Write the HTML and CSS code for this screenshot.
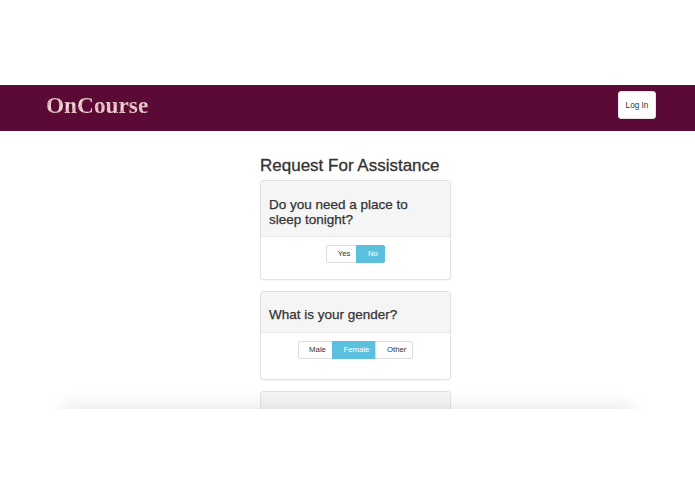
FILE: index.html
```html
<!DOCTYPE html>
<html lang="en">
<head>
<meta charset="utf-8">
<title>OnCourse</title>
<link rel="stylesheet" href="styles.css">
</head>
<body>
<div class="frame">
  <header class="navbar">
    <a class="brand">OnCourse</a>
    <button class="login">Log In</button>
  </header>
  <main class="content">
    <h1 class="title">Request For Assistance</h1>
    <section class="panel">
      <div class="panel-head tall"><h2>Do you need a place to sleep tonight?</h2></div>
      <div class="panel-body first">
        <div class="btn-group">
          <span class="btn">Yes</span><span class="btn active">No</span>
        </div>
      </div>
    </section>
    <section class="panel">
      <div class="panel-head short"><h2>What is your gender?</h2></div>
      <div class="panel-body">
        <div class="btn-group">
          <span class="btn">Male</span><span class="btn active">Female</span><span class="btn">Other</span>
        </div>
      </div>
    </section>
    <section class="panel">
      <div class="panel-head short"></div>
    </section>
  </main>
  <div class="fade"></div>
</div>
</body>
</html>
```
FILE: styles.css
```css
* { box-sizing: border-box; }
html, body { margin: 0; padding: 0; background: #fff; }
body {
  height: 494px;
  overflow: hidden;
  padding-top: 85px;
  font-family: "Liberation Sans", Arial, sans-serif;
  color: #333;
}
.frame {
  position: relative;
  height: 324px;
  overflow: hidden;
}
.navbar {
  height: 45.5px;
  background: #5a0a35;
  display: flex;
  align-items: flex-start;
  justify-content: space-between;
  padding: 6px 39px 0 46px;
}
.brand {
  font-family: "Liberation Serif", "Times New Roman", serif;
  font-weight: 700;
  font-size: 23.3px;
  line-height: 28px;
  color: #e3bcbc;
  background: repeating-linear-gradient(115deg, #f0d6d6 0 2px, #d3a3a6 2px 3px, #e8c6c6 3px 5px);
  -webkit-background-clip: text;
  background-clip: text;
  -webkit-text-fill-color: transparent;
}
.login {
  width: 38px;
  height: 28px;
  padding: 0;
  border: 1px solid #e4e4e4;
  border-radius: 3px;
  background: #fff;
  color: #333;
  font-family: inherit;
  font-size: 8.2px;
}
.content {
  width: 191px;
  margin-left: 260px;
  padding-top: 25.5px;
}
.title {
  margin: 0 0 4px;
  font-size: 17px;
  line-height: 20px;
  font-weight: 500;
  color: #333;
  -webkit-text-stroke: 0.3px #333;
}
.panel {
  border: 1px solid #e2e2e2;
  border-radius: 3px;
  background: #fff;
  margin-bottom: 11px;
  box-shadow: 0 1px 1px rgba(0,0,0,.04);
}
.panel-head {
  background: #f5f5f5;
  border-bottom: 1px solid #e8e8e8;
  padding: 0 8px;
  display: flex;
  align-items: center;
}
.panel-head.tall { height: 56px; padding-top: 6px; }
.panel-head.short { height: 41px; padding-top: 5px; }
.panel-head h2 {
  margin: 0;
  font-size: 13.5px;
  line-height: 15px;
  font-weight: 500;
  color: #333;
  -webkit-text-stroke: 0.25px #333;
}
.panel-body {
  height: 46px;
  padding-top: 8px;
  display: flex;
  justify-content: center;
  align-items: flex-start;
}
.panel-body.first { height: 42px; }
.btn-group { display: flex; }
.btn {
  height: 18px;
  padding: 0 6px 0 10.5px;
  border: 1px solid #ddd;
  background: #fff;
  color: #333;
  font-size: 7.8px;
  line-height: 16px;
}
.btn + .btn { margin-left: -1px; }
.btn:first-child { border-radius: 2px 0 0 2px; }
.btn:last-child { border-radius: 0 2px 2px 0; }
.btn.active {
  background: #5bc0de;
  border-color: #5bc0de;
  color: #fff;
}
.fade {
  position: absolute;
  left: 66px;
  right: 66px;
  bottom: -16px;
  height: 16px;
  box-shadow: 0 0 18px 4px rgba(0,0,0,.085);
}
```
